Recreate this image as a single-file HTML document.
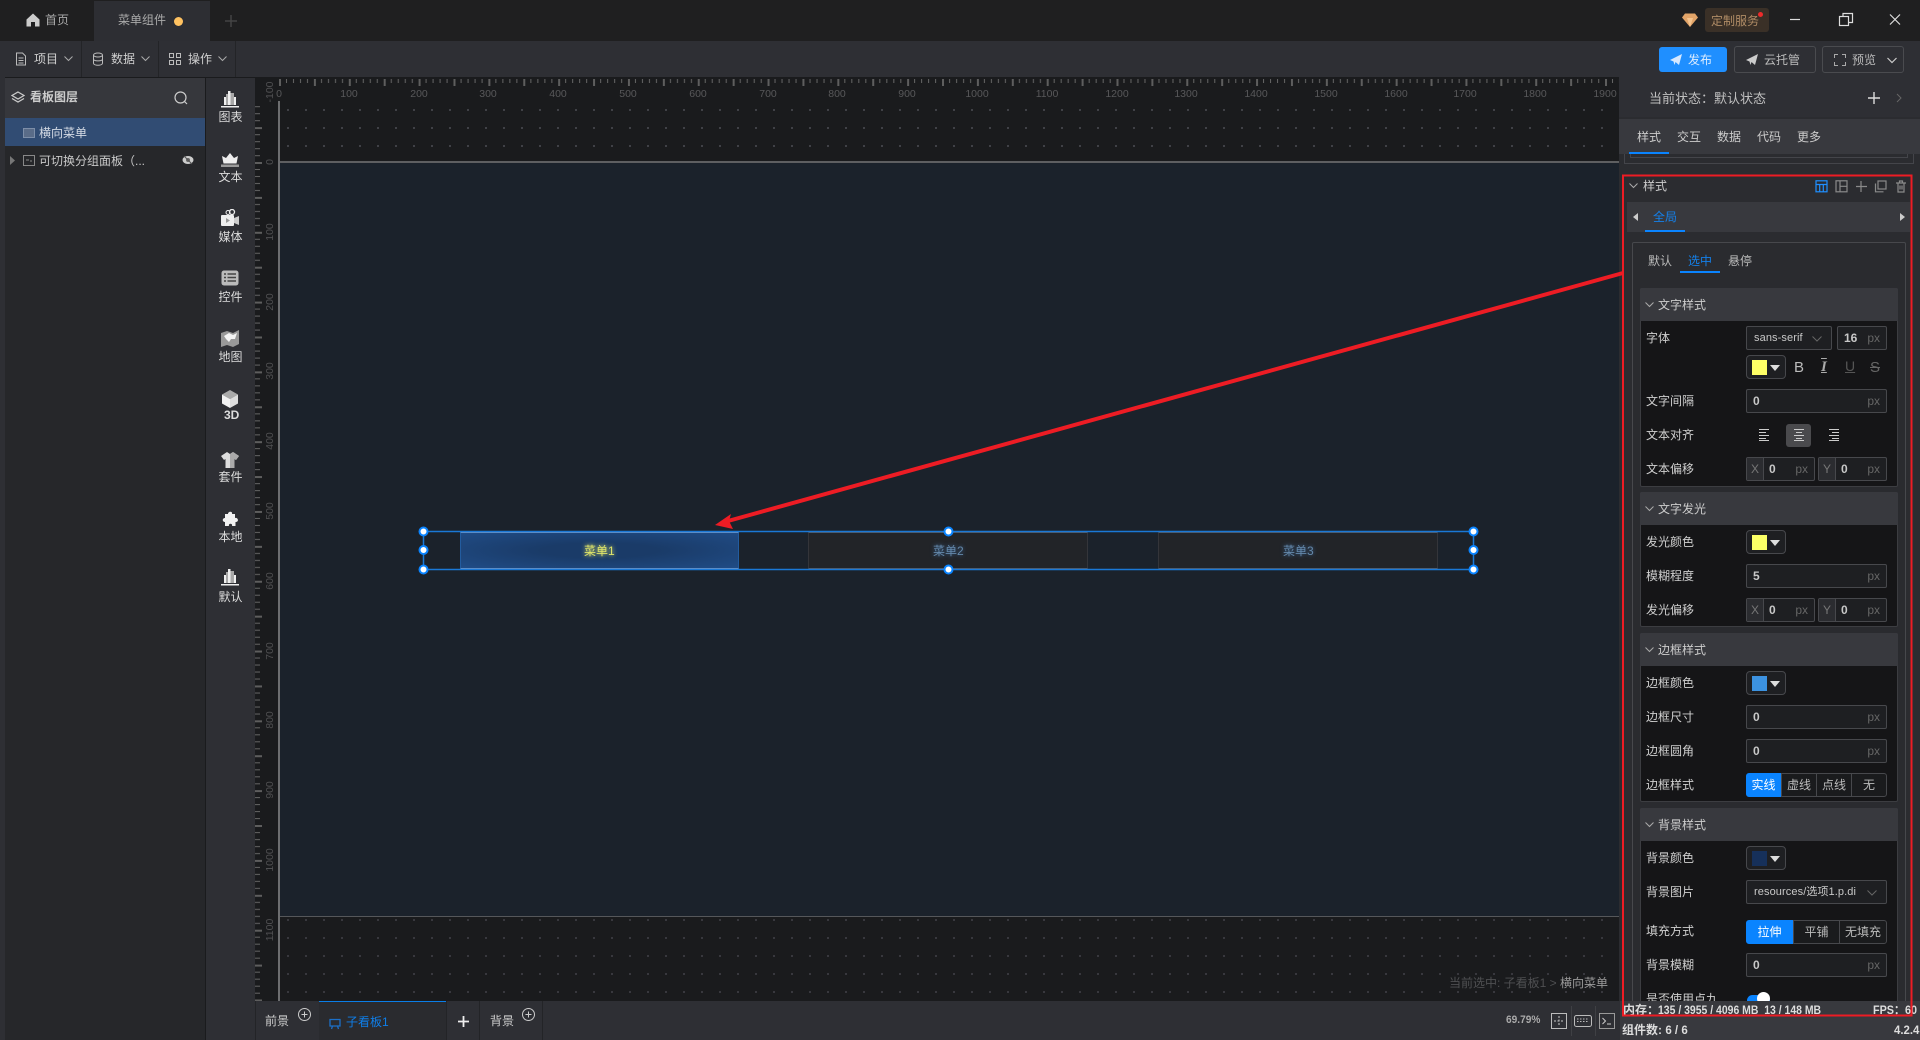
<!DOCTYPE html>
<html lang="zh"><head><meta charset="utf-8"><title>菜单组件</title>
<style>
*{box-sizing:border-box;margin:0;padding:0}
html,body{width:1920px;height:1040px;overflow:hidden;background:#1a1b1d}
body{position:relative;font:12px/1 "Liberation Sans","Noto Sans CJK SC",sans-serif;color:#c8c8c8}
.a,.t,.ip,.cb,.sel,.sec,.sh,.lb,svg.i{position:absolute}
.t{white-space:nowrap}
.lb{left:1646px;white-space:nowrap;color:#cfcfcf;height:14px;line-height:14px}
.ip{left:1746px;height:24px;background:#1e1f22;border:1px solid #47484c;border-radius:2px;padding-left:6px;line-height:22px;font-family:"Liberation Sans Narrow","Liberation Sans",sans-serif;font-weight:700;font-size:12px;color:#c8c8c8}
.ip span{position:absolute;right:6px;top:0;color:#666;font-weight:400}
.ip b{position:absolute;left:0;top:0;bottom:0;width:17px;border-right:1px solid #47484c;background:#2b2c30;color:#777;font-weight:400;text-align:center}
.ip em{position:absolute;left:22px;font-style:normal}
.cb{left:1746px;width:40px;height:24px;border:1px solid #47484c;border-radius:4px;background:#1e1f22}
.cb i{position:absolute;left:5px;top:4px;width:15px;height:15px}
.cb u{position:absolute;left:23px;top:9px;border:5px solid transparent;border-top:6px solid #ddd;border-bottom:0}
.sel{height:24px;background:#1e1f22;border:1px solid #47484c;border-radius:2px;padding-left:7px;line-height:22px;color:#c8c8c8;font-size:11px;letter-spacing:.1px;white-space:nowrap}
.sec{left:1640px;width:258px;background:#151517;border:1px solid #3c3d41;border-radius:2px}
.sh{left:1640px;width:258px;height:33px;background:#38393e;border-radius:2px 2px 0 0}
.sh span{position:absolute;left:18px;top:10px;color:#ccc;height:14px;line-height:14px}
.seg{position:absolute;height:24px;border:1px solid #47484c;border-radius:0;text-align:center;line-height:22px;color:#bbb;background:#1a1b1d}
.seg.on{background:#0a84ff;border-color:#0a84ff;color:#fff}
.cmp{position:absolute;left:206px;width:49px;text-align:center;color:#ddd}
.st{position:absolute;white-space:nowrap;color:#ddd;font-weight:700;font-size:12px;transform-origin:0 50%}
</style></head><body>

<!-- title bar -->
<div class="a" style="left:0;top:0;width:1920px;height:41px;background:#1f1f20"></div>
<div class="a" style="left:94px;top:1px;width:116px;height:40px;background:#2d2e33"></div>
<svg class="i" style="left:26px;top:13px" width="14" height="14" viewBox="0 0 14 14"><path d="M7 .5 13.5 6.5V13.5H9V9H5V13.5H.5V6.5Z" fill="#ccc"/></svg>
<div class="t" style="left:45px;top:14px;color:#aaa">首页</div>
<div class="t" style="left:118px;top:14px;color:#aaa">菜单组件</div>
<div class="a" style="left:174px;top:17px;width:9px;height:9px;border-radius:50%;background:#ffc261"></div>
<svg class="i" style="left:224px;top:14px" width="14" height="14"><path d="M7 1V13M1 7H13" stroke="#444" stroke-width="1.5"/></svg>

<svg class="i" style="left:1682px;top:13px" width="16" height="14" viewBox="0 0 16 14"><path d="M3 .5H13L16 4.5 8 14 0 4.5Z" fill="#e2a468"/><path d="M5 5 8 14 11 5Z" fill="#f6c48e"/></svg>
<div class="a" style="left:1705px;top:8px;width:64px;height:24px;background:#3a3027;border-radius:3px"></div>
<div class="t" style="left:1711px;top:15px;color:#b08c66">定制服务</div>
<div class="a" style="left:1758px;top:12px;width:5px;height:5px;border-radius:50%;background:#ee2b2b"></div>
<svg class="i" style="left:1785px;top:10px" width="125" height="20" fill="none" stroke="#ddd" stroke-width="1.2"><path d="M5 9.5H15"/><rect x="54.5" y="6.5" width="9" height="9"/><path d="M58 6.5V3.5H67.5V12.5H63.5"/><path d="M105 4.5 115 14.500M115 4.500 105 14.500"/></svg>

<!-- toolbar -->
<div class="a" style="left:0;top:41px;width:1920px;height:36px;background:#2e2f34"></div>
<div class="a" style="left:81px;top:41px;width:1px;height:36px;background:#232427"></div>
<div class="a" style="left:158px;top:41px;width:1px;height:36px;background:#232427"></div>
<div class="a" style="left:235px;top:41px;width:1px;height:36px;background:#232427"></div>
<svg class="i" style="left:15px;top:52px" width="12" height="14" fill="none" stroke="#bbb"><path d="M1.500 1H7.500L10.500 4V13H1.500ZM3.500 6H8.500M3.500 8.500H8.500M3.500 11H8.500"/></svg>
<div class="t" style="left:34px;top:53px;color:#d0d0d0">项目</div>
<svg class="i" style="left:64px;top:56px" width="9" height="6" fill="none" stroke="#aaa"><path d="M.5 .5 4.500 4.500 8.500 .5"/></svg>
<svg class="i" style="left:92px;top:52px" width="12" height="14" fill="none" stroke="#bbb"><ellipse cx="6" cy="3" rx="4.500" ry="2"/><path d="M1.500 3V11C1.500 14 10.500 14 10.500 11V3M1.500 7C1.500 9.500 10.500 9.500 10.500 7"/></svg>
<div class="t" style="left:111px;top:53px;color:#d0d0d0">数据</div>
<svg class="i" style="left:141px;top:56px" width="9" height="6" fill="none" stroke="#aaa"><path d="M.5 .5 4.500 4.500 8.500 .5"/></svg>
<svg class="i" style="left:169px;top:53px" width="12" height="12" fill="none" stroke="#bbb"><rect x=".5" y=".5" width="4" height="4"/><rect x="7.500" y=".5" width="4" height="4"/><rect x=".5" y="7.500" width="4" height="4"/><rect x="7.500" y="7.500" width="4" height="4"/></svg>
<div class="t" style="left:188px;top:53px;color:#d0d0d0">操作</div>
<svg class="i" style="left:218px;top:56px" width="9" height="6" fill="none" stroke="#aaa"><path d="M.5 .5 4.500 4.500 8.500 .5"/></svg>

<div class="a" style="left:1659px;top:47px;width:68px;height:25px;background:#1f8fff;border-radius:3px"></div>
<svg class="i" style="left:1670px;top:54px" width="12" height="12"><path d="M0 6 12 0 9 11 5.500 8 4.500 11 3.500 7.500Z" fill="#d5e8ff"/></svg>
<div class="t" style="left:1688px;top:54px;color:#dcecff;font-size:12px">发布</div>
<div class="a" style="left:1734px;top:46px;width:82px;height:27px;border:1px solid #4a4b4f;border-radius:3px"></div>
<svg class="i" style="left:1746px;top:54px" width="12" height="12"><path d="M0 6 12 0 9 11 5.500 8 4.500 11 3.500 7.500Z" fill="#ccc"/></svg>
<div class="t" style="left:1764px;top:54px;color:#bbb">云托管</div>
<div class="a" style="left:1822px;top:46px;width:82px;height:27px;border:1px solid #4a4b4f;border-radius:3px"></div>
<svg class="i" style="left:1834px;top:54px" width="12" height="12" fill="none" stroke="#aaa"><path d="M.5 4V.5H4M8 .5H11.500V4M11.500 8V11.500H8M4 11.500H.5V8"/></svg>
<div class="t" style="left:1852px;top:54px;color:#bbb">预览</div>
<svg class="i" style="left:1887px;top:57px" width="10" height="7" fill="none" stroke="#ccc" stroke-width="1.200"><path d="M.5 1 5 5.500 9.500 1"/></svg>

<!-- left panel -->
<div class="a" style="left:0;top:77px;width:5px;height:963px;background:#2e2f34"></div>
<div class="a" style="left:5px;top:78px;width:200px;height:962px;background:#26272a"></div>
<div class="a" style="left:5px;top:78px;width:200px;height:40px;background:#36373c"></div>
<svg class="i" style="left:11px;top:91px" width="14" height="13" fill="none" stroke="#ccc" stroke-width="1.200"><path d="M7 1 13 4.500 7 8 1 4.500Z"/><path d="M1 7.500 7 11 13 7.500"/></svg>
<div class="t" style="left:30px;top:91px;color:#ccc;font-weight:700">看板图层</div>
<svg class="i" style="left:174px;top:91px" width="14" height="14" fill="none" stroke="#ccc" stroke-width="1.200"><circle cx="6.500" cy="6.500" r="5.500"/><path d="M10.500 10.500 13 13"/></svg>
<div class="a" style="left:5px;top:118px;width:200px;height:28px;background:#314c73"></div>
<svg class="i" style="left:23px;top:128px" width="12" height="10"><rect x=".5" y=".5" width="11" height="9" fill="#5a6c88" stroke="#7d8ea8"/></svg>
<div class="t" style="left:39px;top:127px;color:#d5dbe5">横向菜单</div>
<svg class="i" style="left:10px;top:156px" width="5" height="9"><path d="M0 0 5 4.500 0 9Z" fill="#777"/></svg>
<svg class="i" style="left:23px;top:155px" width="12" height="11" fill="none" stroke="#888"><rect x=".5" y=".5" width="11" height="10"/><path d="M3 5H6M7 6H9" /></svg>
<div class="t" style="left:39px;top:155px;color:#c8c8c8;font-size:12px">可切换分组面板（...</div>
<svg class="i" style="left:182px;top:155px" width="12" height="10"><ellipse cx="6" cy="5" rx="5.500" ry="4" fill="#ccc"/><circle cx="6" cy="5" r="2" fill="#666"/><path d="M2 1 10 9" stroke="#555"/></svg>

<!-- components bar -->
<div class="a" style="left:206px;top:78px;width:49px;height:962px;background:#2e2f34"></div>
<svg class="i" style="left:221px;top:90px" width="18" height="18"><path d="M3 15V7H5V15ZM7 15V1H9.500V15ZM13 15V7H15V15Z" fill="#f0f0f0"/><path d="M5 15V4H7V15ZM9.500 15V3H13V15Z" fill="#a8a8a8"/><rect y="16" width="18" height="1.500" fill="#eee"/></svg>
<div class="cmp" style="top:111px">图表</div>
<svg class="i" style="left:221px;top:152px" width="18" height="16"><path d="M9 1 13 6 17 4 15.500 11.500H2.500L1 4 5 6Z" fill="#eee"/><rect y="12.500" width="18" height="2.500" fill="#999"/></svg>
<div class="cmp" style="top:171px">文本</div>
<svg class="i" style="left:221px;top:209px" width="18" height="18"><circle cx="7" cy="3.500" r="2" fill="none" stroke="#eee"/><circle cx="11" cy="3" r="2.500" fill="none" stroke="#eee" stroke-width="1.300"/><rect y="6" width="13" height="11" rx="1" fill="#eee"/><path d="M13 9 18 7V16L13 14Z" fill="#ccc"/><path d="M5 9V14L9 11.500Z" fill="#999"/></svg>
<div class="cmp" style="top:231px">媒体</div>
<svg class="i" style="left:221px;top:270px" width="18" height="16"><rect x=".5" y=".5" width="17" height="15" rx="2.500" fill="#bbb"/><path d="M3 4H5M6.500 4H15M3 7.500H5M6.500 7.500H15M3 11H5M6.500 11H15" stroke="#444" stroke-width="1.500"/></svg>
<div class="cmp" style="top:291px">控件</div>
<svg class="i" style="left:221px;top:330px" width="18" height="17"><path d="M0 3 6 1 12 3 18 0V14L12 17 6 15 0 17Z" fill="#999"/><path d="M3 6 8 3 12 5 16 3 14 9H10L8 12 5 9Z" fill="#f4f4f4"/></svg>
<div class="cmp" style="top:351px">地图</div>
<svg class="i" style="left:222px;top:390px" width="16" height="18"><path d="M8 0 16 4.500 8 9 0 4.500Z" fill="#aaa"/><path d="M0 4.500 8 9V18L0 13.500Z" fill="#f2f2f2"/><path d="M16 4.500 8 9V18L16 13.500Z" fill="#ddd"/></svg>
<div class="t" style="left:224px;top:409px;color:#ddd;font-weight:700">3D</div>
<svg class="i" style="left:221px;top:452px" width="18" height="16"><path d="M6 0 9 2 12 0 18 4 15 8 13.500 7V16H4.500V7L3 8 0 4Z" fill="#ddd"/><path d="M9 2V16H13.500V7L15 8 18 4 12 0Z" fill="#aaa"/></svg>
<div class="cmp" style="top:471px">套件</div>
<svg class="i" style="left:222px;top:511px" width="17" height="17"><path d="M3 3H6C6 0 11 0 10 3H13V7C16 6 17.500 11 13.500 11V15H10C11 12 6 12 7 15H3V11C0 11 0 7 3 7Z" fill="#f2f2f2"/></svg>
<div class="cmp" style="top:531px">本地</div>
<svg class="i" style="left:221px;top:568px" width="18" height="18"><path d="M3 15V7H5V15ZM7 15V1H9.500V15ZM13 15V7H15V15Z" fill="#f0f0f0"/><path d="M5 15V4H7V15ZM9.500 15V3H13V15Z" fill="#a8a8a8"/><rect y="16" width="18" height="1.500" fill="#eee"/></svg>
<div class="cmp" style="top:591px">默认</div>

<!-- canvas -->
<div class="a" style="left:255px;top:77px;width:1365px;height:924px;background:#1a1b1d"></div>
<div class="a" style="left:279px;top:101px;width:1341px;height:61px;background-image:radial-gradient(circle at 9px 9px,#43444a 0,#43444a 1px,transparent 1.200px);background-size:18px 18px"></div>
<div class="a" style="left:279px;top:916px;width:1341px;height:85px;background-image:radial-gradient(circle at 9px 4px,#3a3b40 0,#3a3b40 1px,transparent 1.200px);background-size:18px 18px"></div>
<div class="a" style="left:279px;top:162px;width:1341px;height:754px;background:#1b222b"></div>
<div class="a" style="left:279px;top:161px;width:1341px;height:2px;background:#5e5f61"></div>
<div class="a" style="left:279px;top:916px;width:1341px;height:1px;background:#55575a"></div>
<div class="a" style="left:278px;top:101px;width:2px;height:900px;background:#6d6e70"></div>

<!-- rulers -->
<svg class="i" style="left:0;top:0" width="1920" height="1040">
<defs>
<pattern id="h" x="279" y="79" width="69.79" height="10" patternUnits="userSpaceOnUse"><rect x="0" width="2" height="7" fill="#5e5e5e"/><rect x="7" width="1" height="4" fill="#666"/><rect x="14" width="1" height="4" fill="#666"/><rect x="21" width="1" height="4" fill="#666"/><rect x="28" width="1" height="4" fill="#666"/><rect x="34.900" width="2" height="7" fill="#5e5e5e"/><rect x="42" width="1" height="4" fill="#666"/><rect x="49" width="1" height="4" fill="#666"/><rect x="56" width="1" height="4" fill="#666"/><rect x="63" width="1" height="4" fill="#666"/></pattern>
<pattern id="v" x="255" y="162" width="10" height="69.79" patternUnits="userSpaceOnUse"><rect y="0" width="7" height="2" fill="#5e5e5e"/><rect y="7" width="5" height="1" fill="#666"/><rect y="14" width="5" height="1" fill="#666"/><rect y="21" width="5" height="1" fill="#666"/><rect y="28" width="5" height="1" fill="#666"/><rect y="34.900" width="7" height="2" fill="#5e5e5e"/><rect y="42" width="5" height="1" fill="#666"/><rect y="49" width="5" height="1" fill="#666"/><rect y="56" width="5" height="1" fill="#666"/><rect y="63" width="5" height="1" fill="#666"/></pattern>
</defs>
<rect x="279" y="79" width="1341" height="8" fill="url(#h)"/>
<rect x="255" y="101" width="8" height="900" fill="url(#v)"/>
<g font-family="Liberation Sans Narrow,Liberation Sans,sans-serif" font-size="10.500" fill="#58585a" text-anchor="middle">
<text x="279" y="97">0</text><text x="349" y="97">100</text><text x="419" y="97">200</text><text x="488" y="97">300</text><text x="558" y="97">400</text><text x="628" y="97">500</text><text x="698" y="97">600</text><text x="768" y="97">700</text><text x="837" y="97">800</text><text x="907" y="97">900</text><text x="977" y="97">1000</text><text x="1047" y="97">1100</text><text x="1117" y="97">1200</text><text x="1186" y="97">1300</text><text x="1256" y="97">1400</text><text x="1326" y="97">1500</text><text x="1396" y="97">1600</text><text x="1465" y="97">1700</text><text x="1535" y="97">1800</text><text x="1605" y="97">1900</text>
<g fill="#505052"><text transform="translate(273,92) rotate(-90)">-100</text><text transform="translate(273,162) rotate(-90)">0</text><text transform="translate(273,232) rotate(-90)">100</text><text transform="translate(273,302) rotate(-90)">200</text><text transform="translate(273,371) rotate(-90)">300</text><text transform="translate(273,441) rotate(-90)">400</text><text transform="translate(273,511) rotate(-90)">500</text><text transform="translate(273,581) rotate(-90)">600</text><text transform="translate(273,651) rotate(-90)">700</text><text transform="translate(273,720) rotate(-90)">800</text><text transform="translate(273,790) rotate(-90)">900</text><text transform="translate(273,860) rotate(-90)">1000</text><text transform="translate(273,930) rotate(-90)">1100</text></g>
</g>
</svg>

<!-- menu component -->
<div class="a" style="left:460px;top:532px;width:279px;height:37px;background:radial-gradient(ellipse at center,#1a3b68 30%,#204c86 100%);border:1px solid #235c9f;border-top-color:#6f94c4;border-bottom-color:#6f94c4"></div>
<div class="t" style="left:584px;top:545px;color:#dfe56a;font-size:12px;text-shadow:0 0 5px #ffff66">菜单1</div>
<div class="a" style="left:808px;top:532px;width:280px;height:37px;background:#222428;border:1px solid #34353a;border-top-color:#55565a;border-bottom-color:#55565a"></div>
<div class="t" style="left:933px;top:545px;color:#6488aa;font-size:12px;text-shadow:0 0 4px #3f6a9a">菜单2</div>
<div class="a" style="left:1158px;top:532px;width:280px;height:37px;background:#222428;border:1px solid #34353a;border-top-color:#55565a;border-bottom-color:#55565a"></div>
<div class="t" style="left:1283px;top:545px;color:#6488aa;font-size:12px;text-shadow:0 0 4px #3f6a9a">菜单3</div>

<svg class="i" style="left:0;top:0" width="1920" height="1040">
<rect x="423.500" y="531.500" width="1050" height="38" fill="none" stroke="#1a78d6" stroke-width="1.500"/>
<g fill="#fff" stroke="#0a84ff" stroke-width="2"><circle cx="423.500" cy="531.500" r="4"/><circle cx="423.500" cy="550" r="4"/><circle cx="423.500" cy="569.500" r="4"/><circle cx="948.500" cy="531.500" r="4"/><circle cx="948.500" cy="569.500" r="4"/><circle cx="1473.500" cy="531.500" r="4"/><circle cx="1473.500" cy="550" r="4"/><circle cx="1473.500" cy="569.500" r="4"/></g>
</svg>

<div class="t" style="left:1449px;top:977px;color:#4f5052">当前选中: 子看板1 &gt; <span style="color:#9a9a9a">横向菜单</span></div>

<!-- bottom bar -->
<div class="a" style="left:255px;top:1001px;width:1365px;height:39px;background:#2e2f34"></div>
<div class="a" style="left:255px;top:1001px;width:1px;height:39px;background:#232427"></div>
<div class="t" style="left:265px;top:1015px;color:#ccc">前景</div>
<svg class="i" style="left:298px;top:1008px" width="13" height="13" fill="none" stroke="#ccc"><circle cx="6.500" cy="6.500" r="6"/><path d="M6.500 3.500V9.500M3.500 6.500H9.500"/></svg>
<div class="a" style="left:319px;top:1001px;width:127px;height:39px;background:#2a2b2f;border-top:1px solid #0a7ee8"></div>
<svg class="i" style="left:329px;top:1018px" width="12" height="12" fill="none" stroke="#1c6fc8" stroke-width="1.300"><path d="M1 1.500H11V8H1ZM3.500 8 2.500 11M8.500 8 9.500 11"/></svg>
<div class="t" style="left:346px;top:1016px;color:#0f7ee8;font-size:12px">子看板1</div>
<div class="a" style="left:446px;top:1001px;width:1px;height:39px;background:#232427"></div>
<svg class="i" style="left:457px;top:1015px" width="13" height="13"><path d="M6.500 1V12M1 6.500H12" stroke="#eee" stroke-width="1.800"/></svg>
<div class="a" style="left:479px;top:1001px;width:1px;height:39px;background:#232427"></div>
<div class="t" style="left:490px;top:1015px;color:#ccc">背景</div>
<svg class="i" style="left:522px;top:1008px" width="13" height="13" fill="none" stroke="#ccc"><circle cx="6.500" cy="6.500" r="6"/><path d="M6.500 3.500V9.500M3.500 6.500H9.500"/></svg>
<div class="a" style="left:542px;top:1001px;width:1px;height:39px;background:#232427"></div>
<div class="t" style="left:1506px;top:1015px;color:#aaa;font-weight:700;font-size:11px;transform:scaleX(.92);transform-origin:0 50%">69.79%</div>
<svg class="i" style="left:1551px;top:1013px" width="16" height="16" fill="none" stroke="#bbb"><rect x=".5" y=".5" width="15" height="15"/><path d="M8 3V13M3 8H13" stroke="#c8c8c8" stroke-dasharray="2 1.500"/></svg>
<div class="a" style="left:1571px;top:1006px;width:1px;height:30px;background:#3f4044"></div>
<svg class="i" style="left:1574px;top:1015px" width="18" height="12" fill="none" stroke="#bbb"><rect x=".5" y=".5" width="17" height="11" rx="2"/><path d="M3 4H15M3 6.500H15" stroke-dasharray="1.500 1.500"/></svg>
<div class="a" style="left:1595px;top:1006px;width:1px;height:30px;background:#3f4044"></div>
<svg class="i" style="left:1599px;top:1013px" width="16" height="16" fill="none" stroke="#999"><rect x=".5" y=".5" width="15" height="15"/><path d="M3.500 5 6.500 8 3.500 11M8 11H12" stroke="#ccc"/></svg>

<!-- right panel -->
<div class="a" style="left:1619px;top:77px;width:301px;height:924px;background:#2b2c30"></div>
<div class="a" style="left:1619px;top:77px;width:301px;height:40px;background:#2e2f34"></div>
<div class="t" style="left:1649px;top:92px;color:#c0c0c0;font-size:13px">当前状态：默认状态</div>
<svg class="i" style="left:1867px;top:91px" width="14" height="14"><path d="M7 1V13M1 7H13" stroke="#ddd" stroke-width="1.400"/></svg>
<svg class="i" style="left:1896px;top:93px" width="6" height="10" fill="none" stroke="#666"><path d="M1 1 5 5 1 9"/></svg>
<div class="a" style="left:1619px;top:119px;width:301px;height:35px;background:#38393e"></div>
<div class="t" style="left:1637px;top:131px;color:#ccc">样式</div>
<div class="t" style="left:1677px;top:131px;color:#ccc">交互</div>
<div class="t" style="left:1717px;top:131px;color:#ccc">数据</div>
<div class="t" style="left:1757px;top:131px;color:#ccc">代码</div>
<div class="t" style="left:1797px;top:131px;color:#ccc">更多</div>
<div class="a" style="left:1629px;top:152px;width:40px;height:2px;background:#0a84ff"></div>
<div class="a" style="left:1624px;top:154px;width:290px;height:10px;border:1px solid #44454a;border-top:0"></div>
<div class="a" style="left:1630px;top:154px;width:278px;height:4px;border:1px solid #44454a;border-top:0"></div>

<div class="a" style="left:1624px;top:176px;width:290px;height:830px;background:#2b2c30"></div>
<svg class="i" style="left:1629px;top:183px" width="9" height="6" fill="none" stroke="#aaa"><path d="M.5 .5 4.500 4.500 8.500 .5"/></svg>
<div class="t" style="left:1643px;top:180px;color:#ccc">样式</div>
<svg class="i" style="left:1815px;top:180px" width="92" height="13" fill="none" stroke="#8a8a8a" stroke-width="1.200">
<g stroke="#1f8fff"><rect x="1" y=".8" width="11" height="11"/><path d="M1 4.500H12M4.700 4.500V11.800M8.300 4.500V11.800" /></g>
<rect x="21" y=".8" width="11" height="11"/><path d="M25 .8V11.800M25 6.300H32"/>
<path d="M46 1V12M41 6.500H52"/>
<rect x="63" y="1" width="8" height="8"/><path d="M60.500 3.500V11.800H68.500"/>
<path d="M81 3H91M83 3V12H89V3M84.500 3V1H87.500V3M85 5.500V9.500M87 5.500V9.500"/>
</svg>
<div class="a" style="left:1627px;top:202px;width:283px;height:30px;background:#38393e"></div>
<svg class="i" style="left:1633px;top:213px" width="5" height="8"><path d="M5 0 0 4 5 8Z" fill="#ccc"/></svg>
<svg class="i" style="left:1900px;top:213px" width="5" height="8"><path d="M0 0 5 4 0 8Z" fill="#ccc"/></svg>
<div class="t" style="left:1653px;top:211px;color:#1480ea">全局</div>
<div class="a" style="left:1645px;top:230px;width:40px;height:2px;background:#0a84ff"></div>

<div class="a" style="left:1632px;top:242px;width:274px;height:770px;border:1px solid #47484c;border-radius:2px;background:#2a2b2f"></div>
<div class="t" style="left:1648px;top:255px;color:#bbb">默认</div>
<div class="t" style="left:1688px;top:255px;color:#1480ea">选中</div>
<div class="t" style="left:1728px;top:255px;color:#bbb">悬停</div>
<div class="a" style="left:1680px;top:271px;width:40px;height:2px;background:#0a84ff"></div>

<!-- section 1 -->
<div class="sec" style="top:288px;height:199px"></div>
<div class="sh" style="top:288px"><svg class="i" style="left:5px;top:14px" width="9" height="6" fill="none" stroke="#aaa"><path d="M.5 .5 4.500 4.500 8.500 .5"/></svg><span>文字样式</span></div>
<div class="lb" style="top:331px">字体</div>
<div class="sel" style="left:1746px;top:326px;width:86px">sans-serif<svg class="i" style="left:65px;top:9px" width="10" height="6" fill="none" stroke="#666"><path d="M.5 .5 5 5 9.500 .5"/></svg></div>
<div class="ip" style="left:1837px;top:326px;width:50px">16<span>px</span></div>
<div class="cb" style="top:355px"><i style="background:#ffff66"></i><u></u></div>
<div class="t" style="left:1794px;top:360px;font-size:15px;color:#bbb">B</div>
<div class="t" style="left:1821px;top:360px;font-size:15px;color:#aaa;font-style:italic;font-weight:700;font-family:'Liberation Serif',serif;text-decoration:underline overline;text-decoration-thickness:1px">I</div>
<div class="t" style="left:1845px;top:359px;font-size:14px;color:#555;text-decoration:underline">U</div>
<div class="t" style="left:1870px;top:360px;font-size:15px;color:#666;text-decoration:line-through">S</div>
<div class="lb" style="top:394px">文字间隔</div>
<div class="ip" style="top:389px;width:141px">0<span>px</span></div>
<div class="lb" style="top:428px">文本对齐</div>
<div class="a" style="left:1786px;top:424px;width:25px;height:23px;background:#4a4a4d;border-radius:3px"></div>
<svg class="i" style="left:1759px;top:429px" width="82" height="12" stroke="#ccc"><path d="M0 .5H10M0 3.500H7M0 6.500H10M0 9.500H7M0 11.500H10"/><path d="M35 .5H45M37 3.500H43M35 6.500H45M37 9.500H43M35 11.500H45"/><path d="M70 .5H80M73 3.500H80M70 6.500H80M73 9.500H80M70 11.500H80"/></svg>
<div class="lb" style="top:462px">文本偏移</div>
<div class="ip" style="top:457px;width:69px"><b>X</b><em>0</em><span>px</span></div>
<div class="ip" style="left:1818px;top:457px;width:69px"><b>Y</b><em>0</em><span>px</span></div>

<!-- section 2 -->
<div class="sec" style="top:492px;height:135px"></div>
<div class="sh" style="top:492px"><svg class="i" style="left:5px;top:14px" width="9" height="6" fill="none" stroke="#aaa"><path d="M.5 .5 4.500 4.500 8.500 .5"/></svg><span>文字发光</span></div>
<div class="lb" style="top:535px">发光颜色</div>
<div class="cb" style="top:530px"><i style="background:#fbff66"></i><u></u></div>
<div class="lb" style="top:569px">模糊程度</div>
<div class="ip" style="top:564px;width:141px">5<span>px</span></div>
<div class="lb" style="top:603px">发光偏移</div>
<div class="ip" style="top:598px;width:69px"><b>X</b><em>0</em><span>px</span></div>
<div class="ip" style="left:1818px;top:598px;width:69px"><b>Y</b><em>0</em><span>px</span></div>

<!-- section 3 -->
<div class="sec" style="top:633px;height:169px"></div>
<div class="sh" style="top:633px"><svg class="i" style="left:5px;top:14px" width="9" height="6" fill="none" stroke="#aaa"><path d="M.5 .5 4.500 4.500 8.500 .5"/></svg><span>边框样式</span></div>
<div class="lb" style="top:676px">边框颜色</div>
<div class="cb" style="top:671px"><i style="background:#3c92e0"></i><u></u></div>
<div class="lb" style="top:710px">边框尺寸</div>
<div class="ip" style="top:705px;width:141px">0<span>px</span></div>
<div class="lb" style="top:744px">边框圆角</div>
<div class="ip" style="top:739px;width:141px">0<span>px</span></div>
<div class="lb" style="top:778px">边框样式</div>
<div class="seg on" style="left:1746px;top:773px;width:35px;border-radius:3px 0 0 3px">实线</div>
<div class="seg" style="left:1781px;top:773px;width:36px">虚线</div>
<div class="seg" style="left:1816px;top:773px;width:36px">点线</div>
<div class="seg" style="left:1851px;top:773px;width:36px;border-radius:0 3px 3px 0">无</div>

<!-- section 4 -->
<div class="sec" style="top:808px;height:200px"></div>
<div class="sh" style="top:808px"><svg class="i" style="left:5px;top:14px" width="9" height="6" fill="none" stroke="#aaa"><path d="M.5 .5 4.500 4.500 8.500 .5"/></svg><span>背景样式</span></div>
<div class="lb" style="top:851px">背景颜色</div>
<div class="cb" style="top:846px"><i style="background:#16305a"></i><u></u></div>
<div class="lb" style="top:885px">背景图片</div>
<div class="sel" style="left:1746px;top:880px;width:141px">resources/选项1.p.di<svg class="i" style="left:120px;top:9px" width="10" height="6" fill="none" stroke="#666"><path d="M.5 .5 5 5 9.500 .5"/></svg></div>
<div class="lb" style="top:924px">填充方式</div>
<div class="seg on" style="left:1746px;top:920px;width:47px;border-radius:3px 0 0 3px">拉伸</div>
<div class="seg" style="left:1793px;top:920px;width:47px">平铺</div>
<div class="seg" style="left:1839px;top:920px;width:48px;border-radius:0 3px 3px 0">无填充</div>
<div class="lb" style="top:958px">背景模糊</div>
<div class="ip" style="top:953px;width:141px">0<span>px</span></div>
<div class="lb" style="top:992px">是否使用点九</div>
<div class="a" style="left:1747px;top:995px;width:23px;height:11px;border-radius:6px;background:#0a84ff"></div>
<div class="a" style="left:1757px;top:992px;width:13px;height:13px;border-radius:50%;background:#fff"></div>

<!-- status bar -->
<div class="a" style="left:1620px;top:1001px;width:300px;height:39px;background:#38393e"></div>
<div class="st" style="left:1623px;top:1004px">内存：</div>
<div class="st" style="left:1658px;top:1004px;transform:scaleX(.87)">135 / 3955 / 4096 MB&nbsp; 13 / 148 MB</div>
<div class="st" style="left:1873px;top:1004px;transform:scaleX(.9)">FPS：</div>
<div class="st" style="left:1905px;top:1004px;transform:scaleX(.9)">60</div>
<div class="st" style="left:1622px;top:1024px">组件数: <span style="font-size:11.500px">6 / 6</span></div>
<div class="st" style="left:1894px;top:1024px;transform:scaleX(.95)">4.2.4</div>

<!-- annotations -->
<svg class="i" style="left:0;top:0" width="1920" height="1040">
<rect x="1623" y="175.500" width="288.500" height="840" fill="none" stroke="#ed1c24" stroke-width="2"/>
<path d="M1623 273 728 521" stroke="#ed1c24" stroke-width="4"/>
<path d="M715 525 731 514 729 521 733 529Z" fill="#ed1c24"/>
</svg>
</body></html>
